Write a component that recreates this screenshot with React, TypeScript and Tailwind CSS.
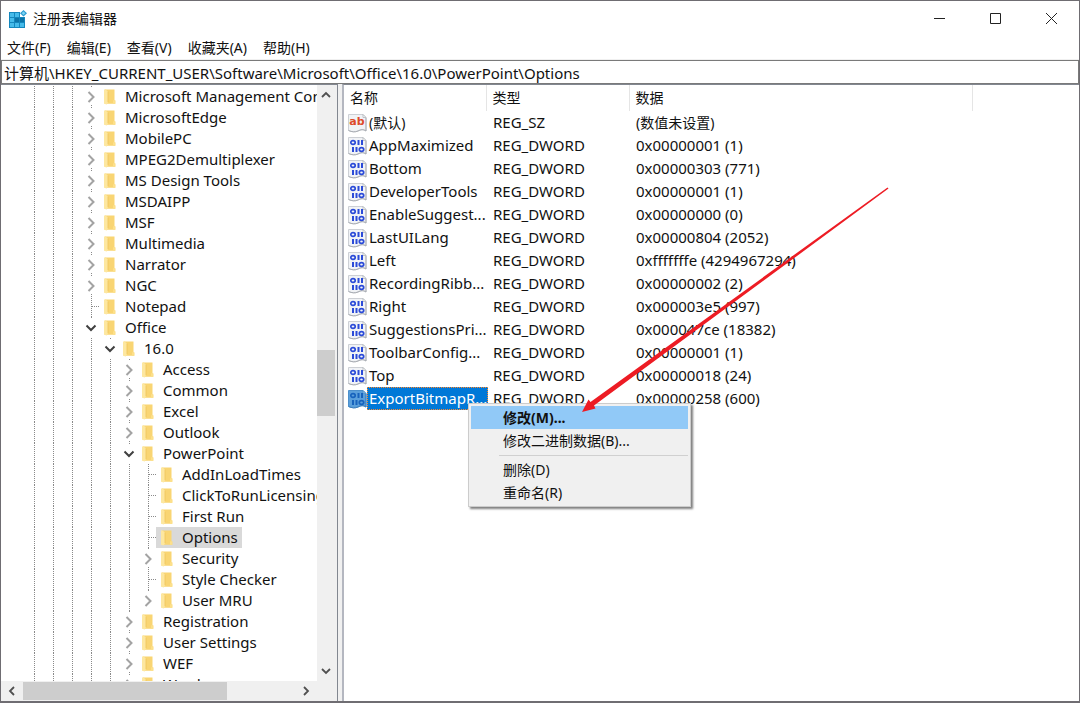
import { Fragment, type ReactNode } from "react";
import clsx from "clsx";

type NodeState = "closed" | "open" | "leaf";

interface TreeNode {
  name: string;
  depth: number;
  state: NodeState;
  last?: boolean;
  selected?: boolean;
}

interface RegValue {
  name: string;
  type: string;
  data: string;
  selected?: boolean;
}

const TREE: TreeNode[] = [
  { name: "Microsoft Management Console", depth: 3, state: "closed" },
  { name: "MicrosoftEdge", depth: 3, state: "closed" },
  { name: "MobilePC", depth: 3, state: "closed" },
  { name: "MPEG2Demultiplexer", depth: 3, state: "closed" },
  { name: "MS Design Tools", depth: 3, state: "closed" },
  { name: "MSDAIPP", depth: 3, state: "closed" },
  { name: "MSF", depth: 3, state: "closed" },
  { name: "Multimedia", depth: 3, state: "closed" },
  { name: "Narrator", depth: 3, state: "closed" },
  { name: "NGC", depth: 3, state: "closed" },
  { name: "Notepad", depth: 3, state: "leaf" },
  { name: "Office", depth: 3, state: "open" },
  { name: "16.0", depth: 4, state: "open" },
  { name: "Access", depth: 5, state: "closed" },
  { name: "Common", depth: 5, state: "closed" },
  { name: "Excel", depth: 5, state: "closed" },
  { name: "Outlook", depth: 5, state: "closed" },
  { name: "PowerPoint", depth: 5, state: "open" },
  { name: "AddInLoadTimes", depth: 6, state: "leaf" },
  { name: "ClickToRunLicensing", depth: 6, state: "leaf" },
  { name: "First Run", depth: 6, state: "leaf" },
  { name: "Options", depth: 6, state: "leaf", selected: true },
  { name: "Security", depth: 6, state: "closed" },
  { name: "Style Checker", depth: 6, state: "leaf" },
  { name: "User MRU", depth: 6, state: "closed", last: true },
  { name: "Registration", depth: 5, state: "closed" },
  { name: "User Settings", depth: 5, state: "closed" },
  { name: "WEF", depth: 5, state: "closed" },
  { name: "Word", depth: 5, state: "closed" },
];

const VALUES: RegValue[] = [
  { name: "(默认)", type: "REG_SZ", data: "(数值未设置)" },
  { name: "AppMaximized", type: "REG_DWORD", data: "0x00000001 (1)" },
  { name: "Bottom", type: "REG_DWORD", data: "0x00000303 (771)" },
  { name: "DeveloperTools", type: "REG_DWORD", data: "0x00000001 (1)" },
  { name: "EnableSuggest...", type: "REG_DWORD", data: "0x00000000 (0)" },
  { name: "LastUILang", type: "REG_DWORD", data: "0x00000804 (2052)" },
  { name: "Left", type: "REG_DWORD", data: "0xfffffffe (4294967294)" },
  { name: "RecordingRibb...", type: "REG_DWORD", data: "0x00000002 (2)" },
  { name: "Right", type: "REG_DWORD", data: "0x000003e5 (997)" },
  { name: "SuggestionsPri...", type: "REG_DWORD", data: "0x000047ce (18382)" },
  { name: "ToolbarConfig...", type: "REG_DWORD", data: "0x00000001 (1)" },
  { name: "Top", type: "REG_DWORD", data: "0x00000018 (24)" },
  { name: "ExportBitmapR...", type: "REG_DWORD", data: "0x00000258 (600)", selected: true },
];

const MENUS = ["文件(F)", "编辑(E)", "查看(V)", "收藏夹(A)", "帮助(H)"];

function RegeditIcon() {
  return (
    <svg width="18" height="18" viewBox="0 0 18 18" aria-hidden="true">
      <path d="M0 2h11v5h5v11H0z" fill="#1487bd" />
      <path d="M1 3h4v4H1zM6 3h4v4H6zM1 8h4v4H1zM1 13h4v4H1zM6 13h4v4H6zM11 13h4v4h-4z" fill="#45bbea" />
      <path d="M6 8h4v4H6zM11 8h4v4h-4z" fill="#0b74a8" />
      <path d="M14.500 0L18 3.200l-3.500 3.300L11 3.200z" fill="#2a9bd0" />
      <path d="M14.500 1.500l1.900 1.700-1.900 1.800-1.900-1.800z" fill="#7bd3f3" />
    </svg>
  );
}

function FolderIcon() {
  return (
    <svg width="12" height="16" viewBox="0 0 12 16" className="shrink-0" aria-hidden="true">
      <path d="M1 .500h9.500v11h.800v3.300H1z" fill="#f9d573" />
      <path d="M9 11.300h2.300v3.500H9z" fill="#fde08a" />
      <path d="M0 .500h1.500L4 2.500V13l-1.200 2.500L0 14.800z" fill="#fde7a0" />
      <path d="M4 2.500V13" stroke="#efc45c" strokeWidth=".8" />
    </svg>
  );
}

function ValueIcon({ text, selected }: { text: boolean; selected?: boolean }) {
  return (
    <svg width="19" height="20" viewBox="0 0 19 20" className="shrink-0" aria-hidden="true">
      <path
        d="M.5 1.500h14.500l3 3v13.500c-3-2-5-1.500-8 0-3 1.300-6 1-9.500-.5z"
        fill={selected ? "#5a9fdb" : "#f1f3f6"}
        stroke={selected ? "#4b8fcc" : "#cdd0d5"}
      />
      <path d="M18 5v13c-3-2-5-1.500-8 0-3 1.300-6 1-9.500-.5" fill="none" stroke={selected ? "#3d7fbd" : "#a9adb3"} />
      <path d="M15 1.500v3h3z" fill={selected ? "#8abbe6" : "#ffffff"} stroke={selected ? "#4b8fcc" : "#a9adb3"} strokeWidth=".7" />
      {text ? (
        <text x="9" y="12" textAnchor="middle" fontSize="11" className="fill-[#dd4b2a] font-['DejaVu_Sans',sans-serif] font-bold">
          ab
        </text>
      ) : (
        <g fill="none" stroke={selected ? "#1763bd" : "#2b4bd8"} strokeWidth="1.700">
          <ellipse cx="5" cy="6.500" rx="2.200" ry="1.800" />
          <path d="M10.500 4v5M14 4v5" strokeWidth="2" />
          <path d="M5 11v5M8.500 11v5" strokeWidth="2" />
          <ellipse cx="13.500" cy="13.500" rx="2.200" ry="1.800" />
        </g>
      )}
    </svg>
  );
}

const ARROWS = {
  up: "M1 7l4-4 4 4",
  down: "M1 3l4 4 4-4",
  left: "M7 1L3 5l4 4",
  right: "M3 1l4 4-4 4",
};

function ScrollArrow({ dir }: { dir: keyof typeof ARROWS }) {
  return (
    <svg width="10" height="10" viewBox="0 0 10 10" fill="none" stroke="#505050" strokeWidth="1.800" aria-hidden="true">
      <path d={ARROWS[dir]} />
    </svg>
  );
}

function CaptionButton({ label, children }: { label: string; children: ReactNode }) {
  return (
    <button type="button" aria-label={label} className="flex h-9 w-14 items-center justify-center">
      <svg width="13" height="13" viewBox="0 0 13 13" fill="none" stroke="#222222" aria-hidden="true">
        {children}
      </svg>
    </button>
  );
}

// Own column of a node: a chevron for keys with children, a dotted elbow for the rest.
function Branch({ state, last }: { state: NodeState; last?: boolean }) {
  if (state === "leaf") {
    return (
      <span className="ml-[9px] flex w-2 shrink-0 items-center border-l border-dotted border-[#8a8a8a]">
        <span className="w-full border-t border-dotted border-[#8a8a8a]" />
      </span>
    );
  }
  return (
    <svg width="17" height="21" viewBox="0 0 17 21" fill="none" className="shrink-0" aria-hidden="true">
      {state === "open" ? (
        <path d="M4.500 8.500l4.500 4.500 4.500-4.500" stroke="#404040" strokeWidth="2" />
      ) : (
        <>
          <path d="M6.500 6l5 5-5 5" stroke="#a3a3a3" strokeWidth="2" />
          {!last && <path d="M9 19h1v1h-1z" fill="#8a8a8a" />}
        </>
      )}
      <path d="M9 0h1v1h-1z" fill="#8a8a8a" />
    </svg>
  );
}

function TreeRow({ node }: { node: TreeNode }) {
  return (
    <li role="treeitem" aria-selected={!!node.selected} className="flex h-[21px] shrink-0 pl-6">
      {Array.from({ length: node.depth }, (_, i) => (
        <span key={i} className="ml-[9px] w-[10px] shrink-0 border-l border-dotted border-[#8a8a8a]" />
      ))}
      <Branch state={node.state} last={node.last} />
      <button
        type="button"
        className={clsx("flex items-center gap-[9px] pr-1 pl-[5px] whitespace-nowrap", node.selected && "bg-[#d9d9d9]")}
      >
        <FolderIcon />
        {node.name}
      </button>
    </li>
  );
}

function KeyTree() {
  return (
    <nav aria-label="注册表项" className="flex w-[337px] shrink-0 flex-col border-t border-r border-[#828790] bg-[#f0f0f0]">
      <div className="flex min-h-0 flex-1">
        <ul role="tree" className="flex min-w-0 flex-1 flex-col overflow-hidden bg-white pt-px text-[15px]">
          {TREE.map((node) => (
            <TreeRow key={node.name} node={node} />
          ))}
        </ul>
        <div className="flex w-[18px] shrink-0 flex-col">
          <button type="button" aria-label="向上滚动" className="flex h-5 items-center justify-center">
            <ScrollArrow dir="up" />
          </button>
          <div className="flex-1">
            <div className="h-[44%]" />
            <div className="h-[12%] bg-[#cdcdcd]" />
          </div>
          <button type="button" aria-label="向下滚动" className="flex h-5 items-center justify-center">
            <ScrollArrow dir="down" />
          </button>
        </div>
        <div className="w-0.5" />
      </div>
      <div className="flex h-5 shrink-0 pr-5">
        <button type="button" aria-label="向左滚动" className="flex w-[22px] items-center justify-center">
          <ScrollArrow dir="left" />
        </button>
        <div className="my-px flex-1">
          <div className="h-full w-3/4 bg-[#cdcdcd]" />
        </div>
        <button type="button" aria-label="向右滚动" className="flex w-[22px] items-center justify-center">
          <ScrollArrow dir="right" />
        </button>
      </div>
    </nav>
  );
}

function ValueTable() {
  return (
    <table className="w-full table-fixed border-collapse text-left text-[15px] whitespace-nowrap">
      <colgroup>
        <col className="w-[142px]" />
        <col className="w-[143px]" />
        <col className="w-[343px]" />
        <col />
      </colgroup>
      <thead>
        <tr className="h-[26px] text-sm">
          {["名称", "类型", "数据"].map((title) => (
            <th key={title} className="border-r border-[#e5e5e5] p-0 pl-1.5 font-normal">
              {title}
            </th>
          ))}
          <td />
        </tr>
      </thead>
      <tbody>
        {VALUES.map((value) => {
          const cjk = value.type === "REG_SZ";
          return (
            <tr key={value.name} className="h-[23px] leading-[21px]">
              <td className="p-0 pl-1">
                <div className="flex h-[23px] items-center">
                  <ValueIcon text={cjk} selected={value.selected} />
                  <span
                    className={clsx(
                      "flex-1 border border-dotted pl-px",
                      value.selected ? "border-[#ff8728] bg-[#0078d7] text-white" : "border-transparent",
                      cjk && "text-sm/[21px]",
                    )}
                  >
                    {value.name}
                  </span>
                </div>
              </td>
              <td className="p-0 pl-[7px]">{value.type}</td>
              <td className={clsx("p-0 pl-[7px]", cjk && "text-sm/[21px]")}>{value.data}</td>
              <td />
            </tr>
          );
        })}
      </tbody>
    </table>
  );
}

const ACTIONS = [
  { label: "修改(M)...", active: true },
  { label: "修改二进制数据(B)..." },
  { label: "删除(D)", divided: true },
  { label: "重命名(R)" },
];

function ContextMenu() {
  return (
    <div
      role="menu"
      className="absolute top-[318px] left-[124px] w-[223px] border border-[#cccccc] bg-[#f0f0f0] p-0.5 text-sm shadow-[2px_2px_2px_rgba(0,0,0,0.5)]"
    >
      {ACTIONS.map((action) => (
        <Fragment key={action.label}>
          {action.divided && <div className="mt-[3px] mb-0.5 ml-7 border-t border-[#d0d0d0]" />}
          <button
            type="button"
            role="menuitem"
            className={clsx("block h-[23px] w-full pl-8 text-left leading-[23px]", action.active && "bg-[#91c9f7] font-bold")}
          >
            {action.label}
          </button>
        </Fragment>
      ))}
    </div>
  );
}

function PointerArrow() {
  return (
    <svg width="308" height="228" viewBox="0 0 308 228" className="pointer-events-none absolute top-[101px] left-[238px]" aria-hidden="true">
      <path d="M305.500 1.400L306.500 2.600 12 219.500l1.500 3L0 226l6.500-12.500 2 2.500z" fill="#ed1c24" />
    </svg>
  );
}

export default function App() {
  return (
    <div className="flex h-screen flex-col overflow-hidden border border-b-2 border-[#6f6d72] bg-white font-['Noto_Sans','Noto_Sans_CJK_SC',sans-serif] text-[#111111]">
      <header className="flex h-[35px] shrink-0 items-center pl-2">
        <RegeditIcon />
        <h1 className="ml-1.5 flex-1 text-sm">注册表编辑器</h1>
        <CaptionButton label="最小化">
          <path d="M1 6.500h11" />
        </CaptionButton>
        <CaptionButton label="最大化">
          <path d="M1.500 1.500h10v10h-10z" />
        </CaptionButton>
        <CaptionButton label="关闭">
          <path d="M1 1l11 11M12 1L1 12" />
        </CaptionButton>
      </header>

      <div className="flex h-6 shrink-0 items-center gap-4 border-b border-[#f0f0f0] pl-1.5 text-sm">
        {MENUS.map((menu) => (
          <button key={menu} type="button">
            {menu}
          </button>
        ))}
      </div>

      <input
        type="text"
        aria-label="地址"
        defaultValue="计算机\HKEY_CURRENT_USER\Software\Microsoft\Office\16.0\PowerPoint\Options"
        className="h-6 shrink-0 border border-[#7a7a7a] px-0.5 text-[15px] outline-none"
      />

      <div className="flex min-h-0 flex-1 bg-[#f0f0f0]">
        <KeyTree />
        <main className="relative ml-1 min-w-0 flex-1 border-t border-l-2 border-[#828790] border-l-[#b4b7c0] bg-white">
          <ValueTable />
          <ContextMenu />
          <PointerArrow />
        </main>
      </div>
    </div>
  );
}
